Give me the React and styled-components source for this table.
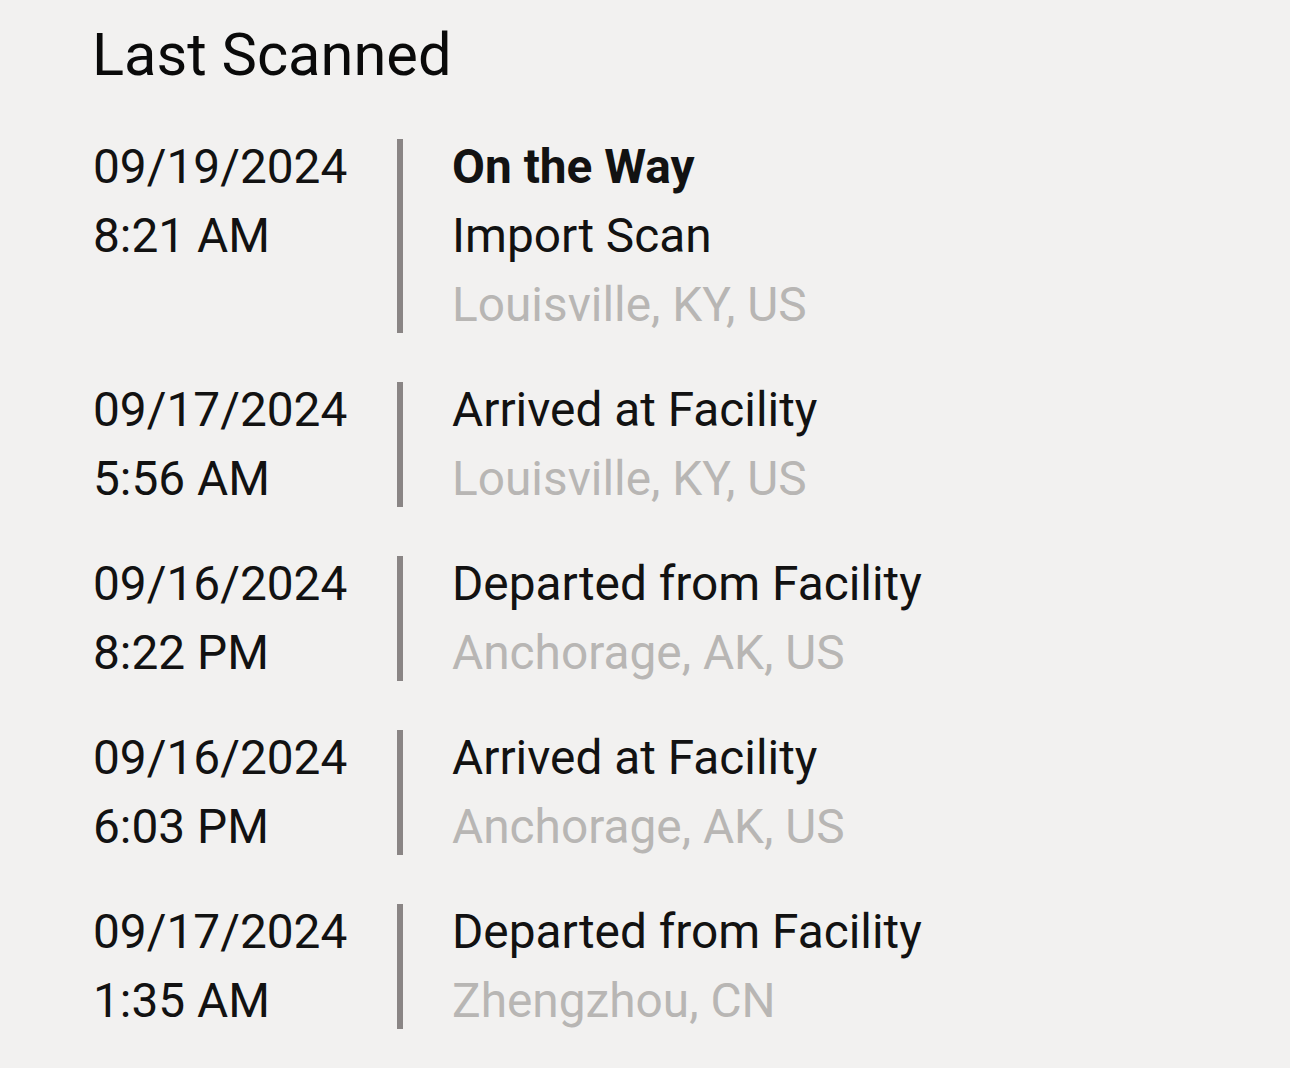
import React from 'react';
import styled, { createGlobalStyle } from 'styled-components';

const scans = [
    { date: '09/19/2024', time: '8:21 AM', status: 'On the Way', event: 'Import Scan', place: 'Louisville, KY, US' },
    { date: '09/17/2024', time: '5:56 AM', event: 'Arrived at Facility', place: 'Louisville, KY, US' },
    { date: '09/16/2024', time: '8:22 PM', event: 'Departed from Facility', place: 'Anchorage, AK, US' },
    { date: '09/16/2024', time: '6:03 PM', event: 'Arrived at Facility', place: 'Anchorage, AK, US' },
    { date: '09/17/2024', time: '1:35 AM', event: 'Departed from Facility', place: 'Zhengzhou, CN' },
];

const App = () => {
    return (
        <>
            <GlobalStyle />
            <Page>
                <Title>Last Scanned</Title>
                <List>
                    {scans.map((s, i) => (
                        <Entry key={i}>
                            <Stack>
                                <Line>{s.date}</Line>
                                <Line>{s.time}</Line>
                            </Stack>
                            <Details>
                                {s.status && <Line bold>{s.status}</Line>}
                                <Line>{s.event}</Line>
                                <Line muted>{s.place}</Line>
                            </Details>
                        </Entry>
                    ))}
                </List>
            </Page>
        </>
    )
}

const GlobalStyle = createGlobalStyle`
    html, body {
        margin: 0;
        background: #f2f1f0;
    }
    body {
        font-family: Roboto, "Liberation Sans", sans-serif;
        color: #121212;
    }
`;

const Page = styled.div`
    min-height: 1068px;
    padding: 18px 0 0 93px;
    box-sizing: border-box;
`;

const Title = styled.h1`
    margin: 0 0 0 -1px;
    font-size: 59.6px;
    font-weight: 400;
    line-height: 75px;
    color: #0a0a0a;
`;

const List = styled.div`
    display: flex;
    flex-direction: column;
    gap: 49px;
    margin-top: 46px;
`;

const Entry = styled.div`
    display: grid;
    grid-template-columns: 304px 1fr;
    align-items: start;
`;

const Stack = styled.div`
    display: flex;
    flex-direction: column;
    gap: 13px;
`;

const Details = styled(Stack)`
    border-left: 6px solid #8a8585;
    padding-left: 49px;
`;

const Line = styled.div`
    font-size: 47.8px;
    line-height: 56px;
    white-space: nowrap;
    font-weight: ${props => props.bold ? 700 : 400};
    color: ${props => props.muted ? '#b8b6b4' : '#121212'};
`;

export default App;
